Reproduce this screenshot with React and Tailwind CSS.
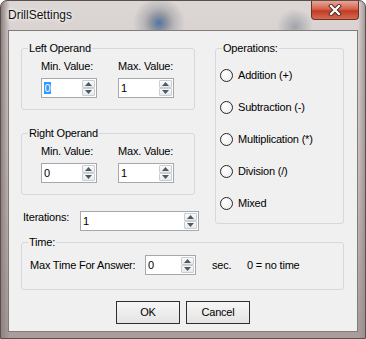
import React from 'react';

function Arrow({ up }) {
  return (
    <svg width="7" height="4" viewBox="0 0 7 4">
      <polygon points={up ? '0,4 3.5,0 7,4' : '0,0 7,0 3.5,4'} fill="#4d5a66" />
    </svg>
  );
}

function SpinBox({ value, className, selected }) {
  return (
    <div className={`flex h-[20px] border border-[#a5a9ae] bg-white ${className}`}>
      <div className="flex flex-1 items-center pl-[2px]">
        {selected ? (
          <span className="bg-[#3399ff] px-[0.5px] leading-[12px] text-white">{value}</span>
        ) : (
          <span className="leading-[12px]">{value}</span>
        )}
      </div>
      <div className="flex w-[14px] flex-col py-[1px] pr-[1px]">
        <div className="flex flex-1 items-center justify-center rounded-[1px] border border-[#c9ced3] bg-[linear-gradient(#fbfbfb,#e8e9ea)]">
          <Arrow up />
        </div>
        <div className="flex flex-1 items-center justify-center rounded-[1px] border border-[#c9ced3] bg-[linear-gradient(#fbfbfb,#e8e9ea)]">
          <Arrow />
        </div>
      </div>
    </div>
  );
}

function Operand({ title, className }) {
  return (
    <fieldset className={`rounded-[3px] border border-[#d5d9dd] ${className}`}>
      <legend className="ml-[6px] px-[1px] leading-[13px]">{title}</legend>
      <div className="flex gap-[21px] pb-[11px] pl-[19px] pt-[5px]">
        <div>
          <div className="leading-[13px]">Min. Value:</div>
          <SpinBox value="0" className="mt-[5px] w-[56px]" selected={title === 'Left Operand'} />
        </div>
        <div>
          <div className="leading-[13px]">Max. Value:</div>
          <SpinBox value="1" className="mt-[5px] w-[56px]" />
        </div>
      </div>
    </fieldset>
  );
}

export default function App() {
  const ops = ['Addition (+)', 'Subtraction (-)', 'Multiplication (*)', 'Division (/)', 'Mixed'];

  return (
    <div className="h-[339px] w-[366px] overflow-hidden rounded-t-[7px] border border-[#57504f] bg-[radial-gradient(circle_at_158px_22px,#4f76a3_0px,#8f95a0_8px,#b9b6b8_15px,transparent_26px),radial-gradient(circle_at_294px_26px,#a2a4aa_0px,transparent_18px),linear-gradient(90deg,#8f8280_0px,transparent_9px,transparent_357px,#958a89_366px),linear-gradient(180deg,#dcd6d5_0%,#cdc4c2_45%,#a99d9b_100%)] font-['Liberation_Sans',Arial,sans-serif] text-[11px] tracking-[-0.2px] text-black">
      <div className="flex h-[29px] items-start justify-between">
        <div className="pl-[7px] pt-[7px] text-[12px] leading-[15px] tracking-normal text-[#111] [text-shadow:0_0_6px_#fff,0_0_3px_#fff]">
          DrillSettings
        </div>
        <div className="mr-[6px] flex h-[19px] w-[48px] items-center justify-center rounded-b-[4px] border border-t-0 border-[#6b3328] bg-[linear-gradient(#e9a596,#d4634c_45%,#c03b24_55%,#d66a4f)]">
          <svg width="14" height="12" viewBox="0 0 14 12">
            <path d="M3 2 L11 10 M11 2 L3 10" stroke="#4a2a25" strokeWidth="4" strokeLinecap="square" />
            <path d="M3 2 L11 10 M11 2 L3 10" stroke="#fff" strokeWidth="2.2" strokeLinecap="square" />
          </svg>
        </div>
      </div>

      <div className="ml-[7px] h-[302px] w-[350px] border border-[#807c7c] bg-[#f0f0f0] px-[12px]">
        <div className="mt-[11px] flex items-start gap-[20px]">
          <div className="w-[174px]">
            <Operand title="Left Operand" />
            <Operand title="Right Operand" className="mt-[17px]" />
            <div className="mt-[16px] flex items-start">
              <div className="w-[59px] shrink-0 pl-[2px] leading-[13px]">Iterations:</div>
              <SpinBox value="1" className="w-[119px] shrink-0" />
            </div>
          </div>

          <fieldset className="w-[129px] rounded-[3px] border border-[#d5d9dd]">
            <legend className="ml-[6px] px-[1px] leading-[13px]">Operations:</legend>
            <div className="py-[4px] pl-[4px]">
              {ops.map((op) => (
                <div key={op} className="flex h-[32px] items-center gap-[5px]">
                  <div className="h-[13px] w-[13px] shrink-0 rounded-full border-[1.5px] border-[#262626] bg-[radial-gradient(circle_at_40%_35%,#ffffff,#e9e9e9)]" />
                  <span className="leading-[13px]">{op}</span>
                </div>
              ))}
            </div>
          </fieldset>
        </div>

        <fieldset className="mt-[5px] w-[323px] rounded-[3px] border border-[#d5d9dd]">
          <legend className="ml-[6px] px-[1px] leading-[13px]">Time:</legend>
          <div className="flex items-center pb-[14px] pl-[8px] pt-[6px]">
            <div className="w-[115px] shrink-0 leading-[13px]">Max Time For Answer:</div>
            <SpinBox value="0" className="w-[51px] shrink-0" />
            <div className="ml-[16px] w-[35px] leading-[13px]">sec.</div>
            <div className="leading-[13px]">0 = no time</div>
          </div>
        </fieldset>

        <div className="mt-[11px] flex justify-center gap-[6px]">
          <button className="h-[23px] w-[64px] border border-[#2f2f2f] bg-[linear-gradient(#f6f6f6,#e4e4e4)] leading-[13px]">
            OK
          </button>
          <button className="h-[23px] w-[64px] border border-[#2f2f2f] bg-[linear-gradient(#f6f6f6,#e4e4e4)] leading-[13px]">
            Cancel
          </button>
        </div>
      </div>
    </div>
  );
}
